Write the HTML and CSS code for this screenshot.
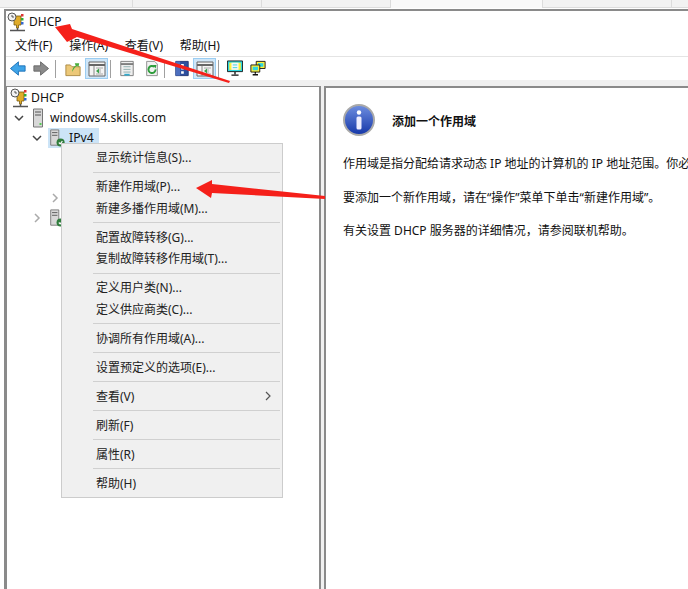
FILE: index.html
```html
<!DOCTYPE html>
<html lang="zh-CN">
<head>
    <meta charset="UTF-8">
    <title>DHCP</title>
    <link rel="stylesheet" href="styles.css">
</head>
<body>
    <svg class="defs" width="0" height="0">
        <symbol id="ico-dhcp" viewBox="0 0 18 20">
            <path d="M7 4h7v9h-2.500v3h-2v-3H7z" fill="#e0ac2a" stroke="#7a5a10" stroke-width=".8"/>
            <circle cx="5" cy="5" r="4" fill="#f2f2f2" stroke="#555"/>
            <path d="M5 3v2h2" fill="none" stroke="#333" stroke-width=".8"/>
            <path d="M14 2h2.500v2.500H14z" fill="#d33"/><path d="M14 6h2.500v2.500H14z" fill="#3a3"/><path d="M14 10h2.500v2.500H14z" fill="#36c"/>
            <path d="M10.500 16v2M3 18.500h15" stroke="#555" stroke-width="1.500"/>
        </symbol>
        <symbol id="ico-server" viewBox="0 0 14 20">
            <path d="M2 1h9v18H2z" fill="#d8d8d8" stroke="#777"/>
            <path d="M3.500 4h6M3.500 7h6" stroke="#555"/>
            <path d="M8 15h2v2H8z" fill="#5c5"/>
        </symbol>
        <symbol id="ico-scope" viewBox="0 0 20 20">
            <path d="M3 1h9v17H3z" fill="#d8d8d8" stroke="#777"/>
            <path d="M4.500 4h6M4.500 7h6" stroke="#555"/>
            <circle cx="14" cy="15" r="4.500" fill="#2f7d3c"/>
            <path d="M12 15l1.500 1.500L16 13.500" fill="none" stroke="#fff" stroke-width="1.200"/>
        </symbol>
        <symbol id="ico-pane" viewBox="0 0 18 18">
            <path d="M1 2h16v14H1z" fill="#f4f4f4" stroke="#666"/>
            <path d="M1 5h16" stroke="#666" stroke-width="2"/>
            <path d="M6 6v10" stroke="#888"/>
            <path d="M8 8h7M8 14h7M12 9v4" stroke="#aaa"/>
            <path d="M11 8.500v5L8 11z" fill="#3aa14a"/>
        </symbol>
        <symbol id="ico-monitor" viewBox="0 0 18 18">
            <path d="M.5.500h17v12H.5z" fill="#2fd6e0" stroke="#111"/>
            <path d="M2.500 2.500h13v8h-13z" fill="#ffef3a"/>
            <path d="M5 2.500h8v8H5z" fill="#f6f6f6"/>
            <path d="M6.500 5h5M6.500 8h5" stroke="#2fd6e0"/>
            <path d="M9 13v2.500M5 16.500h8" stroke="#111" stroke-width="1.500"/>
        </symbol>
    </svg>

    <div class="topstrip">
        <div class="strip-cell strip-a"></div>
        <div class="strip-cell strip-b"></div>
        <div class="strip-cell strip-b"></div>
        <div class="strip-cell strip-active"></div>
        <div class="strip-cell strip-b"></div>
        <div class="strip-cell strip-end"></div>
    </div>

    <div class="window">
        <div class="titlebar">
            <svg class="ico-title"><use href="#ico-dhcp"/></svg>
            <span>DHCP</span>
        </div>

        <div class="menubar">
            <span>文件(F)</span>
            <span>操作(A)</span>
            <span>查看(V)</span>
            <span>帮助(H)</span>
        </div>

        <div class="toolbar">
            <svg class="tool ml-4" viewBox="0 0 18 18"><path d="M0.500 9l9-7.500V6H17v6H9.500v4.500z" fill="#3ea4e8" stroke="#1b6fb5"/></svg>
            <svg class="tool ml-7" viewBox="0 0 18 18"><path d="M17.500 9l-9-7.500V6H1v6h7.500v4.500z" fill="#8a8a8a" stroke="#666"/></svg>
            <i class="tool-sep ml-6"></i>
            <svg class="tool ml-9" viewBox="0 0 18 18"><path d="M1 5h5l2 2h9v10H1z" fill="#ecc878" stroke="#a8853c"/><path d="M8 13c0-4 2-6 4-7l-1-3h5l-1 5-1-2c-2 1-4 3-6 7z" fill="#4caf3e"/></svg>
            <span class="tool-on ml-4"><svg class="tool-pane"><use href="#ico-pane"/></svg></span>
            <i class="tool-sep ml-2"></i>
            <svg class="tool ml-8" viewBox="0 0 18 18"><path d="M2 1h14v16H2z" fill="#eee" stroke="#777"/><path d="M2 4h14" stroke="#777" stroke-width="2"/><path d="M5 7h8M5 10h8M5 13h8" stroke="#8aa"/><path d="M6 16h6" stroke="#3ac" stroke-width="2"/></svg>
            <svg class="tool ml-9" viewBox="0 0 18 18"><path d="M3 1h9l3 3v13H3z" fill="#f2f2f2" stroke="#888"/><path d="M13 10a4 4 0 1 1-1.500-3" fill="none" stroke="#2f9d3c" stroke-width="2.200"/><path d="M10 5l4 0-1 4z" fill="#2f9d3c"/></svg>
            <i class="tool-sep ml-4"></i>
            <svg class="tool ml-9" viewBox="0 0 18 18"><path d="M2 1h14v16H2z" fill="#2d4f9e" stroke="#1f3370"/><path d="M2 1h5v16H2z" fill="#4c6fbf"/><path d="M8 4h3v6H8zM8 12h3v3H8z" fill="#fff"/></svg>
            <span class="tool-on ml-3"><svg class="tool-pane"><use href="#ico-pane"/></svg></span>
            <i class="tool-sep ml-2"></i>
            <svg class="tool ml-8"><use href="#ico-monitor"/></svg>
            <svg class="tool ml-7" viewBox="0 0 18 18">
                <path d="M7 1h10v8H7z" fill="#ffef3a" stroke="#111"/><path d="M9 3h6v4H9z" fill="#2fd6e0"/>
                <path d="M1 5h10v8H1z" fill="#ffef3a" stroke="#111"/><path d="M3 7h6v4H3z" fill="#2fd6e0"/>
                <path d="M6 13v2M3 16h6" stroke="#111" stroke-width="1.500"/>
            </svg>
        </div>

        <div class="panes">
            <div class="tree">
                <div class="tree-row">
                    <svg class="ico-node"><use href="#ico-dhcp"/></svg>
                    <span>DHCP</span>
                </div>
                <div class="tree-row lvl-1">
                    <svg class="chev" viewBox="0 0 10 10"><path d="M1 3l4 4 4-4" fill="none" stroke="#444" stroke-width="1.500"/></svg>
                    <svg class="ico-node ico-narrow"><use href="#ico-server"/></svg>
                    <span>windows4.skills.com</span>
                </div>
                <div class="tree-row lvl-2">
                    <svg class="chev" viewBox="0 0 10 10"><path d="M1 3l4 4 4-4" fill="none" stroke="#444" stroke-width="1.500"/></svg>
                    <div class="tree-sel">
                        <svg class="ico-node"><use href="#ico-scope"/></svg>
                        <span>IPv4</span>
                    </div>
                </div>
                <div class="tree-row"></div>
                <div class="tree-row"></div>
                <div class="tree-row lvl-3">
                    <svg class="chev" viewBox="0 0 10 10"><path d="M3 1l4 4-4 4" fill="none" stroke="#aaa" stroke-width="1.500"/></svg>
                </div>
                <div class="tree-row lvl-2">
                    <svg class="chev" viewBox="0 0 10 10"><path d="M3 1l4 4-4 4" fill="none" stroke="#aaa" stroke-width="1.500"/></svg>
                    <svg class="ico-node"><use href="#ico-scope"/></svg>
                </div>
            </div>

            <div class="detail">
                <div class="detail-head">
                    <svg class="ico-info" viewBox="0 0 32 32">
                        <defs>
                            <linearGradient id="info-fill" x1="0" y1="0" x2="0" y2="1">
                                <stop offset="0" stop-color="#6f8fe0"/>
                                <stop offset="1" stop-color="#1436a8"/>
                            </linearGradient>
                        </defs>
                        <circle cx="16" cy="16" r="15" fill="url(#info-fill)" stroke="#a9a9a9" stroke-width="2"/>
                        <circle cx="16" cy="8.500" r="2.200" fill="#fff"/>
                        <rect x="13.500" y="12.500" width="5" height="13" rx="1.500" fill="#eef"/>
                    </svg>
                    <h2>添加一个作用域</h2>
                </div>
                <p>作用域是指分配给请求动态 IP 地址的计算机的 IP 地址范围。你必须先创建并配置作用域，然后才能分配动态 IP 地址。</p>
                <p>要添加一个新作用域，请在“操作”菜单下单击“新建作用域”。</p>
                <p>有关设置 DHCP 服务器的详细情况，请参阅联机帮助。</p>
            </div>
        </div>
    </div>

    <div class="ctx-menu">
        <div class="ctx-item">显示统计信息(S)...</div>
        <div class="ctx-sep"></div>
        <div class="ctx-item">新建作用域(P)...</div>
        <div class="ctx-item">新建多播作用域(M)...</div>
        <div class="ctx-sep"></div>
        <div class="ctx-item">配置故障转移(G)...</div>
        <div class="ctx-item">复制故障转移作用域(T)...</div>
        <div class="ctx-sep"></div>
        <div class="ctx-item">定义用户类(N)...</div>
        <div class="ctx-item">定义供应商类(C)...</div>
        <div class="ctx-sep"></div>
        <div class="ctx-item">协调所有作用域(A)...</div>
        <div class="ctx-sep"></div>
        <div class="ctx-item">设置预定义的选项(E)...</div>
        <div class="ctx-sep"></div>
        <div class="ctx-item ctx-more">查看(V)<svg class="ctx-arrow" viewBox="0 0 6 10"><path d="M1 1l4 4-4 4" fill="none" stroke="#555" stroke-width="1.200"/></svg></div>
        <div class="ctx-sep"></div>
        <div class="ctx-item">刷新(F)</div>
        <div class="ctx-sep"></div>
        <div class="ctx-item">属性(R)</div>
        <div class="ctx-sep"></div>
        <div class="ctx-item">帮助(H)</div>
    </div>

    <!-- red annotation arrows -->
    <svg class="marks" viewBox="0 0 688 589">
        <polygon points="55,27 70,24 72,29 230,81 229,83 77,37 67,42" fill="#f5201a"/>
        <polygon points="196,188 212,180 212,184 325,196 325,199 212,193 211,198" fill="#f5201a"/>
    </svg>
</body>
</html>
```

FILE: styles.css
```css
html, body {
    margin: 0;
    padding: 0;
    height: 589px;
    overflow: hidden;
}
body {
    position: relative;
    background-color: #fff;
    color: #111;
    font-family: "Noto Sans", "Noto Sans CJK SC", sans-serif;
    font-size: 12px;
    line-height: 16px;
}
.defs {
    position: absolute;
}
.topstrip {
    height: 9px;
    display: flex;
    box-sizing: border-box;
    padding-bottom: 1px;
}
.strip-cell {
    box-sizing: border-box;
    background-color: #f2f2f2;
    border-right: 1px solid #dcdcdc;
    border-bottom: 1px solid #dcdcdc;
}
.strip-a {
    width: 133px;
}
.strip-b {
    width: 129px;
}
.strip-active {
    width: 152px;
    background-color: #f9f9f9;
    border-bottom: none;
}
.strip-end {
    flex: 1;
    border-right: none;
}
.window {
    margin-left: 4px;
    height: 580px;
    display: flex;
    flex-direction: column;
    border-top: 2px solid #8a8a8a;
    border-left: 2px solid #8a8a8a;
    background-color: #fff;
}
.titlebar {
    height: 24px;
    box-sizing: border-box;
    padding: 0 0 2px 1px;
    display: flex;
    align-items: center;
    gap: 4px;
}
.ico-title {
    width: 18px;
    height: 20px;
}
.menubar {
    height: 21px;
    display: flex;
    align-items: center;
    gap: 16.700px;
    padding-left: 9px;
    border-bottom: 1px solid #e4e4e4;
}
.toolbar {
    height: 23px;
    display: flex;
    align-items: center;
}
.tool {
    width: 16px;
    height: 17px;
    flex: none;
}
.tool-pane {
    width: 18px;
    height: 18px;
}
.ml-2 { margin-left: 2px; }
.ml-3 { margin-left: 3px; }
.ml-4 { margin-left: 4px; }
.ml-6 { margin-left: 6px; }
.ml-7 { margin-left: 7px; }
.ml-8 { margin-left: 8px; }
.ml-9 { margin-left: 9px; }
.tool-sep {
    width: 1px;
    height: 18px;
    background-color: #a0a0a0;
}
.tool-on {
    display: flex;
    align-items: center;
    justify-content: center;
    width: 23px;
    height: 21px;
    box-sizing: border-box;
    background-color: #cfe6f8;
    border: 1px solid #9bcdf2;
}
.panes {
    flex: 1;
    display: flex;
    gap: 3px;
    padding-top: 6px;
    background-color: #f0f0f0;
}
.tree {
    width: 315px;
    background-color: #fff;
    border: 1px solid #8a8a8a;
    border-right-width: 2px;
    padding-top: 1px;
    box-sizing: border-box;
}
.tree-row {
    height: 20px;
    display: flex;
    align-items: center;
    padding-left: 3px;
    font-size: 12.200px;
}
.lvl-1 {
    padding-left: 7px;
}
.lvl-2 {
    padding-left: 25px;
}
.lvl-3 {
    padding-left: 43px;
}
.chev {
    width: 10px;
    height: 10px;
    margin-right: 6px;
    flex: none;
}
.ico-node {
    width: 18px;
    height: 20px;
    margin-right: 3px;
    flex: none;
}
.ico-narrow {
    width: 17px;
}
.tree-sel {
    display: flex;
    align-items: center;
    height: 20px;
    width: 51px;
    background-color: #cce4f7;
}
.detail {
    flex: 1;
    min-width: 0;
    background-color: #fff;
    border: 1px solid #8a8a8a;
    border-width: 2px 0 0 2px;
    padding: 16px 0 0 17px;
    white-space: nowrap;
}
.detail-head {
    display: flex;
    align-items: center;
    gap: 17px;
    margin-bottom: 20px;
}
.ico-info {
    width: 32px;
    height: 32px;
}
.detail-head h2 {
    margin: 0;
    padding-top: 4px;
    font-size: 12px;
    font-weight: bold;
}
.detail p {
    margin: 0 0 17.500px 0;
}
.ctx-menu {
    position: absolute;
    left: 61px;
    top: 143px;
    width: 187px;
    height: 350px;
    padding: 3px 2px 0 31px;
    background-color: #f0f0f0;
    border: 1px solid #ccc;
}
.ctx-item {
    height: 21.600px;
    line-height: 21.600px;
    padding-left: 3px;
    white-space: nowrap;
    color: #222;
}
.ctx-more {
    display: flex;
    align-items: center;
    justify-content: space-between;
    padding-right: 9px;
}
.ctx-arrow {
    width: 6px;
    height: 10px;
}
.ctx-sep {
    height: 1px;
    margin: 3.200px 0;
    background-color: #d0d0d0;
}
.marks {
    position: absolute;
    left: 0;
    top: 0;
    width: 688px;
    height: 589px;
    pointer-events: none;
}
```
